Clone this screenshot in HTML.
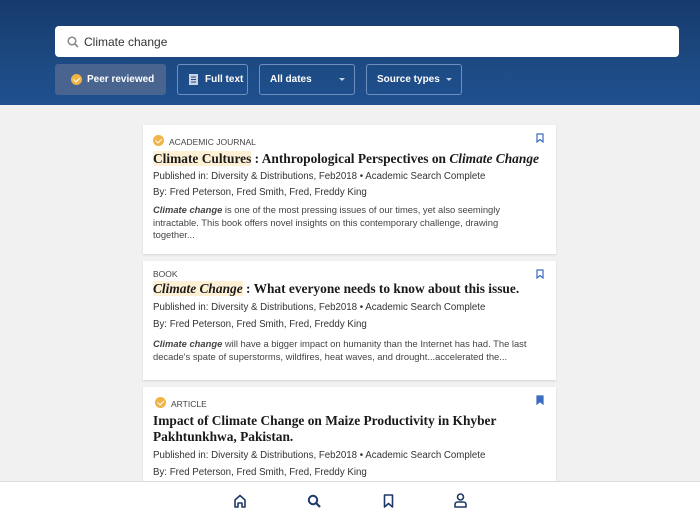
<!DOCTYPE html><html><head><style>
*{box-sizing:border-box;margin:0;padding:0}
body{width:700px;height:525px;overflow:hidden;background:#f1f1f1;font-family:"Liberation Sans",sans-serif;color:#333;position:relative}
.hdr{position:absolute;left:0;top:0;width:700px;height:105px;background:linear-gradient(180deg,#163a6c,#1d4a82 60%,#1f5090)}
.search{position:absolute;left:55px;top:26px;width:624px;height:31px;background:#fff;border-radius:4px;font-size:12px;color:#333;padding:9px 0 0 29px}
.btn{position:absolute;top:64px;height:31px;border:1px solid #6f8fbe;border-radius:3px;color:#fff;font-size:10px;font-weight:bold;padding-top:9px}
.card{position:absolute;left:143px;width:413px;background:#fff;box-shadow:0 1px 2px rgba(0,0,0,.12);padding:0 10px}
.type{font-size:8.5px;color:#444;position:absolute;top:12px}
.t{font-family:"Liberation Serif",serif;font-size:13.4px;color:#1a1a1a;font-weight:bold;position:absolute;left:10px;white-space:nowrap}
.m{font-size:9.7px;color:#333;position:absolute;left:10px;white-space:nowrap}
.d{font-size:9.4px;color:#444;line-height:12.5px;position:absolute;left:10px;width:380px}
.hl{background:#fdf0d4}
.bm{position:absolute;right:12px;top:8px}
.badge{position:absolute;width:11px;height:11px;border-radius:50%;background:#f0b447}
.badge:after{content:"";position:absolute;left:3.5px;top:2px;width:2.5px;height:4.5px;border:solid #fff;border-width:0 1.3px 1.3px 0;transform:rotate(45deg)}
.arr{position:absolute;right:9px;top:13px;width:0;height:0;border-left:3px solid transparent;border-right:3px solid transparent;border-top:3px solid #c8d3e4}
.nav{position:absolute;left:0;top:481px;width:700px;height:44px;background:#fff;border-top:1px solid #ddd}
</style></head><body>
<div class="hdr"></div>
<div class="search"><svg style="position:absolute;left:12px;top:10px" width="12" height="12" viewBox="0 0 12 12"><circle cx="5" cy="5" r="3.8" fill="none" stroke="#888" stroke-width="1.5"/><path d="M8 8l3 3" stroke="#888" stroke-width="1.6"/></svg>Climate change</div>
<div class="btn" style="left:55px;width:111px;background:#48648f;border-color:#48648f;padding-left:31px"><span class="badge" style="left:15px;top:9px"></span>Peer reviewed</div>
<div class="btn" style="left:177px;width:71px;padding-left:27px"><svg style="position:absolute;left:11px;top:9px" width="9" height="11"><rect x="0" y="0" width="9" height="11" fill="#c8d3e4"/><path d="M2 3h5M2 5.5h5M2 8h5" stroke="#2a4a7a"/></svg>Full text</div>
<div class="btn" style="left:259px;width:96px;padding-left:10px">All dates<span class="arr"></span></div>
<div class="btn" style="left:366px;width:96px;padding-left:10px">Source types<span class="arr"></span></div>

<div class="card" style="top:125px;height:129px">
<span class="badge" style="left:10px;top:10px"></span><div class="type" style="left:26px">ACADEMIC JOURNAL</div>
<svg class="bm" width="8" height="10"><path d="M1 1h6v8L4 6.5 1 9z" fill="none" stroke="#3a6cc0" stroke-width="1.2"/></svg>
<div class="t" style="top:26px"><span class="hl">Climate Cultures</span> : Anthropological Perspectives on <i>Climate Change</i></div>
<div class="m" style="top:46px">Published in: Diversity &amp; Distributions, Feb2018 • Academic Search Complete</div>
<div class="m" style="top:62px">By: Fred Peterson, Fred Smith, Fred, Freddy King</div>
<div class="d" style="top:79px"><b><i>Climate change</i></b> is one of the most pressing issues of our times, yet also seemingly intractable. This book offers novel insights on this contemporary challenge, drawing together...</div>
</div>

<div class="card" style="top:261px;height:119px">
<div class="type" style="left:10px;top:8px">BOOK</div>
<svg class="bm" width="8" height="10"><path d="M1 1h6v8L4 6.5 1 9z" fill="none" stroke="#3a6cc0" stroke-width="1.2"/></svg>
<div class="t" style="top:20px"><i class="hl">Climate Change</i> : What everyone needs to know about this issue.</div>
<div class="m" style="top:41px">Published in: Diversity &amp; Distributions, Feb2018 • Academic Search Complete</div>
<div class="m" style="top:58px">By: Fred Peterson, Fred Smith, Fred, Freddy King</div>
<div class="d" style="top:77px"><b><i>Climate change</i></b> will have a bigger impact on humanity than the Internet has had. The last decade's spate of superstorms, wildfires, heat waves, and drought...accelerated the...</div>
</div>

<div class="card" style="top:387px;height:110px">
<span class="badge" style="left:12px;top:10px"></span><div class="type" style="left:28px">ARTICLE</div>
<svg class="bm" width="8" height="10"><path d="M1 1h6v8L4 6.5 1 9z" fill="#3a6cc0" stroke="#3a6cc0" stroke-width="1.2"/></svg>
<div class="t" style="top:26px;line-height:16px">Impact of Climate Change on Maize Productivity in Khyber<br>Pakhtunkhwa, Pakistan.</div>
<div class="m" style="top:63px">Published in: Diversity &amp; Distributions, Feb2018 • Academic Search Complete</div>
<div class="m" style="top:80px">By: Fred Peterson, Fred Smith, Fred, Freddy King</div>
</div>

<div class="nav">
<svg style="position:absolute;left:233px;top:12px" width="14" height="14" viewBox="0 0 14 14"><path d="M2 13V6l5-4.5L12 6v7H9V9H5v4z" fill="none" stroke="#1d3a66" stroke-width="1.6" stroke-linejoin="round"/></svg>
<svg style="position:absolute;left:307px;top:12px" width="14" height="14" viewBox="0 0 14 14"><circle cx="6" cy="6" r="4.2" fill="none" stroke="#1d3a66" stroke-width="2"/><path d="M9 9l4 4" stroke="#1d3a66" stroke-width="2.2"/></svg>
<svg style="position:absolute;left:383px;top:12px" width="11" height="14" viewBox="0 0 11 14"><path d="M1.5 1h8v12L5.5 9.5 1.5 13z" fill="none" stroke="#1d3a66" stroke-width="1.6" stroke-linejoin="round"/></svg>
<svg style="position:absolute;left:454px;top:11px" width="13" height="15" viewBox="0 0 13 15"><circle cx="6.5" cy="4" r="3" fill="none" stroke="#1d3a66" stroke-width="1.6"/><path d="M1 14v-2.5Q1 9 4 9h5q3 0 3 2.5V14z" fill="none" stroke="#1d3a66" stroke-width="1.6" stroke-linejoin="round"/></svg>
</div>
</body></html>
